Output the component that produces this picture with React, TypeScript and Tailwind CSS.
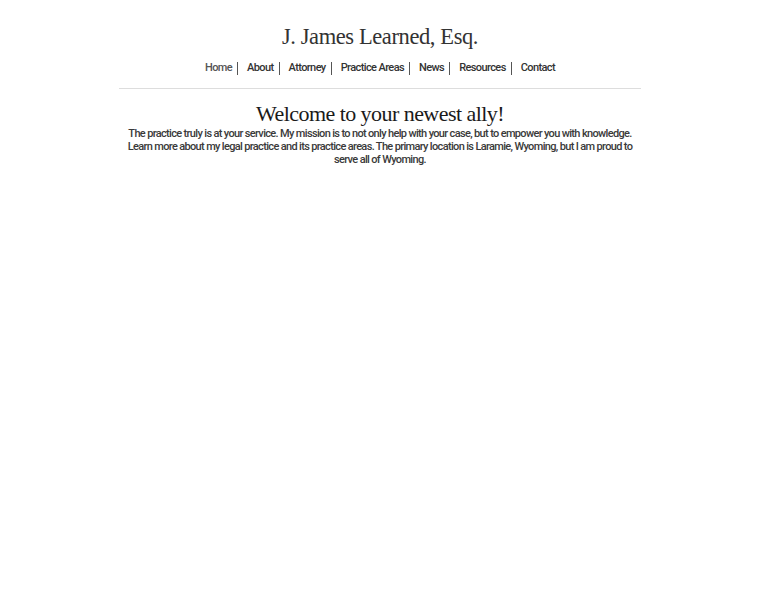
const NAV = ["Home", "About", "Attorney", "Practice Areas", "News", "Resources", "Contact"];

export default function App() {
  return (
    <div className="min-h-[600px] bg-white text-[#333]" style={{ fontFamily: "Roboto, 'Liberation Sans', sans-serif" }}>
      <div className="mx-auto w-[522px]">
        {/* Header */}
        <div className="pt-[22px] text-center text-[22.5px] leading-[30px] tracking-[-0.4px] text-[#333]" style={{ fontFamily: "'Liberation Serif', serif" }}>
          J. James Learned, Esq.
        </div>
        <nav className="mt-[9px] flex justify-center text-[11px] leading-[14px] font-medium tracking-[-0.6px]">
          {NAV.map((item, i) => (
            <div key={item} className="flex items-center">
              <a className={i === 0 ? "text-[#555]" : "text-[#333]"}>{item}</a>
              {i < NAV.length - 1 && <span className="ml-[5px] mr-[9px] h-[13px] w-px bg-[#555]" />}
            </div>
          ))}
        </nav>
        <div className="mt-[13px] h-px bg-[#ddd]" />

        {/* Welcome */}
        <div className="mt-[12px] text-center">
          <h1 className="text-[22px] leading-[26px] tracking-[-0.55px] text-[#1a1a1a]" style={{ fontFamily: "'Liberation Serif', serif" }}>
            Welcome to your newest ally!
          </h1>
          <p className="text-[11px] leading-[13px] font-medium tracking-[-0.66px] text-[#3a3a3a]">
            The practice truly is at your service. My mission is to not only help with your case, but to empower you with knowledge. Learn more about my legal practice and its practice areas. The primary location is Laramie, Wyoming, but I am proud to serve all of Wyoming.
          </p>
        </div>
      </div>
    </div>
  );
}
